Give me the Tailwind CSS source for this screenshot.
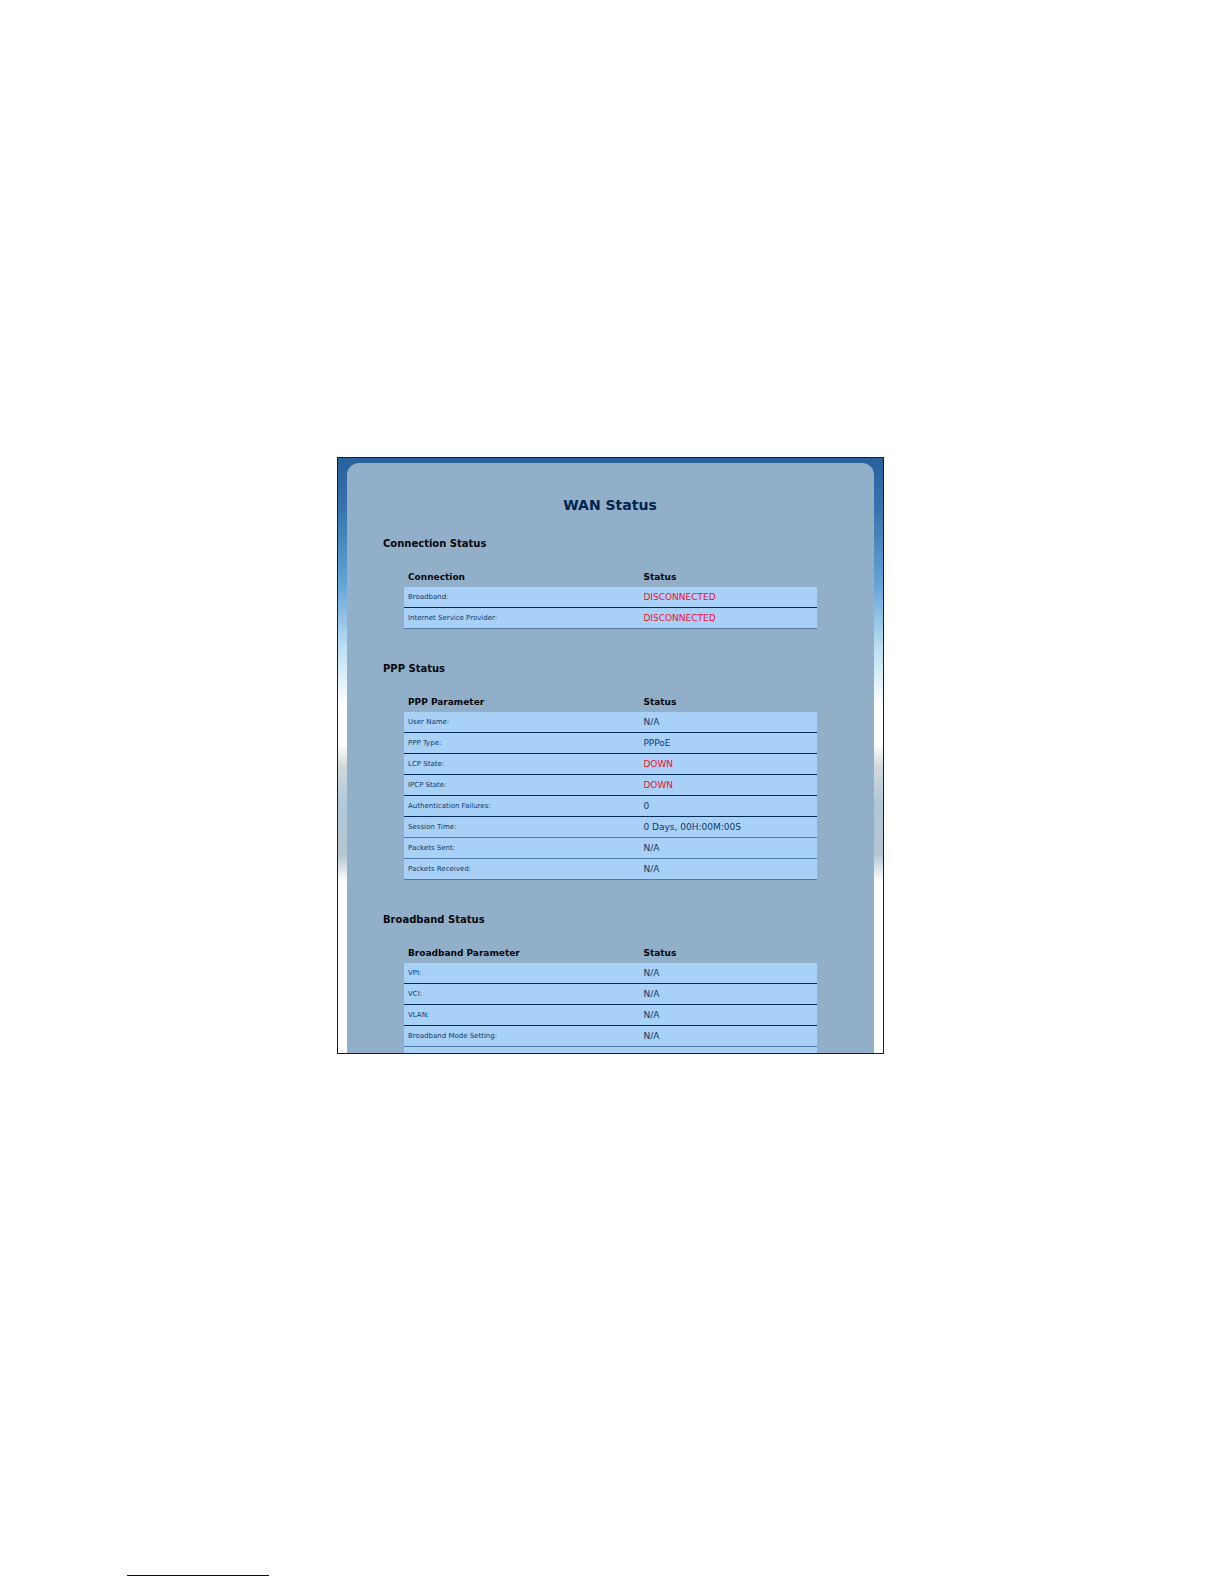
<!DOCTYPE html>
<html lang="en">
  <head>
    <meta charset="UTF-8" />
    <meta name="viewport" content="width=device-width, initial-scale=1.0" />
    <title>WAN Status</title>
    <script src="https://cdn.jsdelivr.net/npm/@tailwindcss/browser@4"></script>
  </head>
  <body class="flex min-h-screen flex-col bg-white font-['DejaVu_Sans',sans-serif]">
    <main class="pt-[457px] pr-[3px]">
      <!-- Sky gradient shows on both sides of the panel -->
      <div class="mx-auto max-w-[547px] border border-[#1c1c24] bg-[linear-gradient(to_bottom,#28629c_0px,#3873ad_50px,#64a2d6_125px,#bcdff4_190px,#ffffff_248px,#ffffff_286px,#d4d9dc_308px,#b0c8d9_345px,#b4c5d1_396px,#ffffff_424px)] px-[9px] pt-[5px]">
        <div class="rounded-t-xl bg-[#91afc9] pt-8 pr-[57px] pl-9">
          <h1 class="mb-[21px] pl-5 text-center text-[14px] leading-5 font-bold text-[#00234f]">WAN Status</h1>

          <section>
            <h2 class="mb-[18px] text-[10px] leading-4 font-bold text-[#05070d]">Connection Status</h2>
            <div class="pl-[21px]">
              <table class="w-full table-fixed border-separate border-spacing-0 text-left text-[#0f3a68]">
                <thead>
                  <tr class="h-[17px] text-[9px] leading-[14px] text-[#05070d]">
                    <th class="w-[57%] px-1 pt-0 pb-[3px] font-bold">Connection</th>
                    <th class="px-1 pt-0 pb-[3px] font-bold">Status</th>
                  </tr>
                </thead>
                <tbody id="connection"></tbody>
              </table>
            </div>
          </section>

          <section class="mt-8">
            <h2 class="mb-[18px] text-[10px] leading-4 font-bold text-[#05070d]">PPP Status</h2>
            <div class="pl-[21px]">
              <table class="w-full table-fixed border-separate border-spacing-0 text-left text-[#0f3a68]">
                <thead>
                  <tr class="h-[17px] text-[9px] leading-[14px] text-[#05070d]">
                    <th class="w-[57%] px-1 pt-0 pb-[3px] font-bold">PPP Parameter</th>
                    <th class="px-1 pt-0 pb-[3px] font-bold">Status</th>
                  </tr>
                </thead>
                <tbody id="ppp"></tbody>
              </table>
            </div>
          </section>

          <section class="mt-8">
            <h2 class="mb-[18px] text-[10px] leading-4 font-bold text-[#05070d]">Broadband Status</h2>
            <div class="pl-[21px]">
              <table class="w-full table-fixed border-separate border-spacing-0 text-left text-[#0f3a68]">
                <thead>
                  <tr class="h-[17px] text-[9px] leading-[14px] text-[#05070d]">
                    <th class="w-[57%] px-1 pt-0 pb-[3px] font-bold">Broadband Parameter</th>
                    <th class="px-1 pt-0 pb-[3px] font-bold">Status</th>
                  </tr>
                </thead>
                <tbody id="broadband"></tbody>
              </table>
              <div class="h-[6px] bg-[#a9d0f7]"></div>
            </div>
          </section>
        </div>
      </div>
    </main>

    <footer class="mt-auto pb-2 pl-[127px]">
      <hr class="w-[142px] border-t border-[#000080]" />
    </footer>

    <script>
      const data = {
        connection: [
          ["Broadband:", "DISCONNECTED"],
          ["Internet Service Provider:", "DISCONNECTED"],
        ],
        ppp: [
          ["User Name:", "N/A"],
          ["PPP Type:", "PPPoE"],
          ["LCP State:", "DOWN"],
          ["IPCP State:", "DOWN"],
          ["Authentication Failures:", "0"],
          ["Session Time:", "0 Days, 00H:00M:00S"],
          ["Packets Sent:", "N/A"],
          ["Packets Received:", "N/A"],
        ],
        broadband: [
          ["VPI:", "N/A"],
          ["VCI:", "N/A"],
          ["VLAN:", "N/A"],
          ["Broadband Mode Setting:", "N/A"],
        ],
      };

      // rows whose bottom rule is drawn lighter
      const light = ["Internet Service Provider:", "Session Time:", "Packets Sent:", "Packets Received:", "Broadband Mode Setting:"];

      Object.keys(data).forEach((key) => {
        const body = document.getElementById(key);
        data[key].forEach(([label, value]) => {
          const bad = value === "DISCONNECTED" || value === "DOWN";
          const line = light.includes(label) ? "border-[#4f7ba8]" : "border-[#00285a]";
          const tr = document.createElement("tr");
          tr.className = "h-[21px] bg-[#a9d0f7]";
          tr.innerHTML = `
            <td class="border-b ${line} px-1 py-0 text-[7px] leading-4">${label}</td>
            <td class="border-b ${line} px-1 py-0 text-[9px] leading-4 ${bad ? "text-[#f0102a]" : ""}">${value}</td>`;
          body.appendChild(tr);
        });
      });
    </script>
  </body>
</html>
